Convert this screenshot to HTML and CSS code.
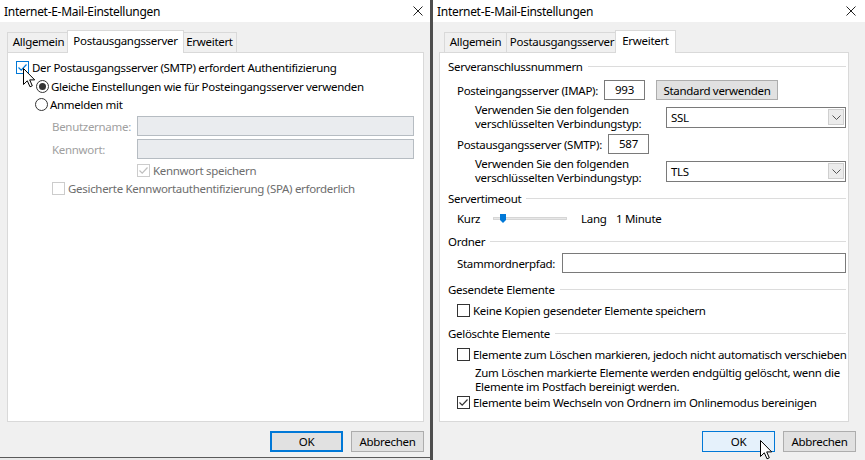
FILE: index.html
```html
<!DOCTYPE html>
<html lang="de">
<head>
  <meta charset="UTF-8">
  <title>Internet-E-Mail-Einstellungen</title>
  <link rel="stylesheet" href="styles.css">
</head>
<body>
  <div class="desktop">

    <!-- Dialog 1: Postausgangsserver -->
    <div class="dialog dialog-left">
      <div class="titlebar">
        <span class="title">Internet-E-Mail-Einstellungen</span>
        <svg class="close" width="10" height="10" viewBox="0 0 10 10"><path d="M0.5 0.5 L9.5 9.5 M9.5 0.5 L0.5 9.5" stroke="#222" stroke-width="1"/></svg>
      </div>
      <div class="tabs">
        <div class="tab tab-general">Allgemein</div>
        <div class="tab tab-smtp active">Postausgangsserver</div>
        <div class="tab tab-adv">Erweitert</div>
      </div>
      <div class="panel panel-smtp">
        <div class="row row-auth">
          <svg class="cb hover" width="13" height="13" viewBox="0 0 13 13"><rect x="0.5" y="0.5" width="12" height="12"/><path d="M2.5 6.5 L5.2 9.2 L10.5 3.5"/></svg>
          <span>Der Postausgangsserver (SMTP) erfordert Authentifizierung</span>
        </div>
        <div class="row row-same">
          <svg class="radio" width="13" height="13" viewBox="0 0 13 13"><circle cx="6.5" cy="6.5" r="6"/><circle class="dot" cx="6.5" cy="6.5" r="3.5"/></svg>
          <span>Gleiche Einstellungen wie für Posteingangsserver verwenden</span>
        </div>
        <div class="row row-login">
          <svg class="radio" width="13" height="13" viewBox="0 0 13 13"><circle cx="6.5" cy="6.5" r="6"/></svg>
          <span>Anmelden mit</span>
        </div>
        <div class="row row-field">
          <span class="field-label disabled">Benutzername:</span>
          <span class="textbox disabled"></span>
        </div>
        <div class="row row-field">
          <span class="field-label disabled">Kennwort:</span>
          <span class="textbox disabled"></span>
        </div>
        <div class="row row-save">
          <svg class="cb disabled" width="13" height="13" viewBox="0 0 13 13"><rect x="0.5" y="0.5" width="12" height="12"/><path d="M2.5 6.5 L5.2 9.2 L10.5 3.5"/></svg>
          <span class="muted">Kennwort speichern</span>
        </div>
        <div class="row row-spa">
          <svg class="cb disabled" width="13" height="13" viewBox="0 0 13 13"><rect x="0.5" y="0.5" width="12" height="12"/></svg>
          <span class="muted">Gesicherte Kennwortauthentifizierung (SPA) erforderlich</span>
        </div>
      </div>
      <div class="actions">
        <button class="btn default">OK</button>
        <button class="btn">Abbrechen</button>
      </div>
      <svg class="cursor cursor-left" width="13" height="20" viewBox="0 0 13 20"><path d="M0.5 0.5 L0.5 16.5 L4.3 12.8 L7 18.8 L9.3 17.8 L6.7 11.9 L11.7 11.9 Z"/></svg>
    </div>

    <div class="divider"></div>

    <!-- Dialog 2: Erweitert -->
    <div class="dialog dialog-right">
      <div class="titlebar">
        <span class="title">Internet-E-Mail-Einstellungen</span>
        <svg class="close" width="10" height="10" viewBox="0 0 10 10"><path d="M0.5 0.5 L9.5 9.5 M9.5 0.5 L0.5 9.5" stroke="#222" stroke-width="1"/></svg>
      </div>
      <div class="tabs">
        <div class="tab tab-general">Allgemein</div>
        <div class="tab tab-smtp">Postausgangsserver</div>
        <div class="tab tab-adv active">Erweitert</div>
      </div>
      <div class="panel panel-adv">
        <div class="group-title g-ports">Serveranschlussnummern</div>

        <div class="row row-imap">
          <span class="lbl-imap">Posteingangsserver (IMAP):</span>
          <span class="textbox port">993</span>
          <button class="btn btn-std">Standard verwenden</button>
        </div>
        <div class="row row-crypt">
          <span class="crypt-text">Verwenden Sie den folgenden<br>verschlüsselten Verbindungstyp:</span>
          <div class="select">
            <span>SSL</span>
            <span class="select-arrow"><svg width="9" height="5" viewBox="0 0 9 5"><path d="M0.5 0.5 L4.5 4.5 L8.5 0.5" fill="none" stroke="#555"/></svg></span>
          </div>
        </div>
        <div class="row row-smtp">
          <span class="lbl-smtp">Postausgangsserver (SMTP):</span>
          <span class="textbox port">587</span>
        </div>
        <div class="row row-crypt">
          <span class="crypt-text">Verwenden Sie den folgenden<br>verschlüsselten Verbindungstyp:</span>
          <div class="select">
            <span>TLS</span>
            <span class="select-arrow"><svg width="9" height="5" viewBox="0 0 9 5"><path d="M0.5 0.5 L4.5 4.5 L8.5 0.5" fill="none" stroke="#555"/></svg></span>
          </div>
        </div>

        <div class="group-title g-timeout">Servertimeout</div>
        <div class="row row-timeout">
          <span class="lbl-short">Kurz</span>
          <span class="slider">
            <span class="track"></span>
            <svg class="thumb" width="6" height="9" viewBox="0 0 6 9"><path d="M0 0 H6 V6 L3 9 L0 6 Z" fill="#0078d7"/></svg>
          </span>
          <span class="lbl-long">Lang</span>
          <span>1 Minute</span>
        </div>

        <div class="group-title g-folder">Ordner</div>
        <div class="row row-root">
          <span class="lbl-root">Stammordnerpfad:</span>
          <span class="textbox root"></span>
        </div>

        <div class="group-title g-sent">Gesendete Elemente</div>
        <div class="row row-check r-nocopy">
          <svg class="cb" width="13" height="13" viewBox="0 0 13 13"><rect x="0.5" y="0.5" width="12" height="12"/></svg>
          <span>Keine Kopien gesendeter Elemente speichern</span>
        </div>

        <div class="group-title g-deleted">Gelöschte Elemente</div>
        <div class="row row-check r-mark">
          <svg class="cb" width="13" height="13" viewBox="0 0 13 13"><rect x="0.5" y="0.5" width="12" height="12"/></svg>
          <span>Elemente zum Löschen markieren, jedoch nicht automatisch verschieben</span>
        </div>
        <p class="note">Zum Löschen markierte Elemente werden endgültig gelöscht, wenn die<br>Elemente im Postfach bereinigt werden.</p>
        <div class="row row-check r-purge">
          <svg class="cb" width="13" height="13" viewBox="0 0 13 13"><rect x="0.5" y="0.5" width="12" height="12"/><path d="M2.5 6.5 L5.2 9.2 L10.5 3.5"/></svg>
          <span>Elemente beim Wechseln von Ordnern im Onlinemodus bereinigen</span>
        </div>
      </div>
      <div class="actions">
        <button class="btn hover">OK</button>
        <button class="btn">Abbrechen</button>
      </div>
      <svg class="cursor cursor-right" width="13" height="20" viewBox="0 0 13 20"><path d="M0.5 0.5 L0.5 16.5 L4.3 12.8 L7 18.8 L9.3 17.8 L6.7 11.9 L11.7 11.9 Z"/></svg>
    </div>

  </div>
</body>
</html>
```

FILE: styles.css
```css
* {
  box-sizing: border-box;
  margin: 0;
  padding: 0;
}

body {
  width: 865px;
  height: 460px;
  overflow: hidden;
  font-family: "Noto Sans", "Open Sans", sans-serif;
  font-size: 11.5px;
  letter-spacing: -0.3px;
  white-space: nowrap;
  color: #000;
  background-color: #e9e9e9;
}

.desktop {
  display: flex;
  height: 460px;
}

.dialog {
  position: relative;
  display: flex;
  flex-direction: column;
  background-color: #f0f0f0;
}

.dialog-left {
  width: 430px;
  height: 458px;
  border-bottom: 1px solid #5a5a5a;
}

.dialog-right {
  width: 432px;
  height: 460px;
}

.divider {
  width: 3px;
  background-color: #4e4e4e;
}

/* title bar */

.titlebar {
  height: 22px;
  display: flex;
  align-items: center;
  justify-content: space-between;
  padding: 0 7px 0 4px;
  background-color: #fff;
  font-size: 12px;
}

.dialog-right .titlebar {
  padding-right: 9px;
}

/* tabs */

.tabs {
  display: flex;
  align-items: flex-end;
  height: 22px;
  margin-top: 8px;
  padding-left: 7px;
}

.dialog-right .tabs {
  padding-left: 11px;
}

.tab {
  height: 20px;
  line-height: 18px;
  text-align: center;
  border: 1px solid #d9d9d9;
  border-bottom: none;
  background-color: #f0f0f0;
  margin-right: -1px;
}

.tab-general {
  width: 63px;
}

.tab-smtp {
  width: 112px;
}

.tab-adv {
  width: 55px;
}

.tab.active {
  position: relative;
  z-index: 1;
  height: 23px;
  margin: 0 -2px -1px;
  line-height: 20px;
  background-color: #fff;
}

.tab-smtp.active {
  width: 117px;
}

.tab-adv.active {
  width: 61px;
}

/* panel */

.panel {
  height: 370px;
  background-color: #fff;
  border: 1px solid #d9d9d9;
}

.panel-smtp {
  width: 417px;
  margin-left: 7px;
  padding: 5px 0 0 8px;
}

.panel-adv {
  width: 410px;
  margin-left: 6px;
  padding: 5px 2px 0 8px;
}

.row {
  display: flex;
  align-items: center;
}

.row > span {
  flex: none;
}

/* checkbox / radio */

.cb {
  flex: none;
  margin-right: 3px;
}

.cb rect {
  fill: #fff;
  stroke: #333;
}

.cb path {
  fill: none;
  stroke: #333;
  stroke-width: 1.2;
}

.cb.hover rect {
  fill: #fff;
  stroke: #0078d7;
}

.cb.hover path {
  stroke: #0078d7;
}

.cb.disabled rect {
  stroke: #cccccc;
}

.cb.disabled path {
  stroke: #bfbfbf;
}

.radio {
  flex: none;
  margin-right: 2px;
}

.radio circle {
  fill: #fff;
  stroke: #333;
}

.radio .dot {
  fill: #333;
  stroke: none;
}

/* left dialog rows */

.row-auth {
  height: 19px;
}

.row-same {
  height: 18px;
  margin-left: 20px;
}

.row-login {
  height: 18px;
  margin-left: 19px;
}

.row-field {
  height: 20px;
  margin-top: 3px;
  margin-left: 36px;
}

.field-label {
  width: 85px;
}

.disabled {
  color: #a0a0a0;
}

.muted {
  color: #6d6d6d;
}

.textbox {
  display: inline-block;
  height: 20px;
  border: 1px solid #7a7a7a;
  background-color: #fff;
}

.textbox.disabled {
  width: 277px;
  border-color: #b6bcc2;
  background-color: #eaecef;
}

.row-save {
  height: 18px;
  margin-top: 2px;
  margin-left: 121px;
}

.row-spa {
  height: 18px;
  margin-left: 36px;
}

/* right dialog */

.group-title {
  display: flex;
  align-items: center;
  height: 16px;
}

.group-title::after {
  content: "";
  flex: 1;
  height: 1px;
  margin-left: 5px;
  background-color: #dcdcdc;
}

.g-timeout {
  margin-top: 5px;
}

.g-folder {
  margin-top: 7px;
}

.g-sent {
  margin-top: 8px;
}

.g-deleted {
  margin-top: 7px;
}

.row-imap,
.row-smtp {
  height: 20px;
  margin-top: 6px;
  margin-left: 9px;
}

.row-smtp {
  margin-top: 3px;
}

.lbl-imap {
  width: 147px;
}

.lbl-smtp {
  width: 151px;
}

.textbox.port {
  width: 41px;
  line-height: 18px;
  text-align: center;
}

.btn {
  height: 21px;
  font-family: inherit;
  font-size: 11.5px;
  letter-spacing: -0.3px;
  color: #000;
  background-color: #e1e1e1;
  border: 1px solid #adadad;
}

.btn-std {
  width: 122px;
  height: 20px;
  margin-left: 11px;
}

.row-crypt {
  height: 28px;
  margin-top: 3px;
  margin-left: 27px;
}

.crypt-text {
  width: 191px;
  line-height: 14px;
}

.select {
  display: flex;
  align-items: center;
  justify-content: space-between;
  width: 180px;
  height: 21px;
  padding: 0 1px 0 4px;
  border: 1px solid #7a7a7a;
  background-color: #fff;
}

.select-arrow {
  display: flex;
  align-items: center;
  justify-content: center;
  width: 16px;
  height: 16px;
  border: 1px solid #cfcfcf;
  background-color: #ececec;
}

.row-timeout {
  height: 16px;
  margin-top: 4px;
  margin-left: 9px;
}

.lbl-short {
  width: 36px;
}

.slider {
  position: relative;
  width: 74px;
  height: 16px;
  display: flex;
  align-items: center;
}

.track {
  width: 74px;
  height: 3px;
  background-color: #e7e7e7;
  border: 1px solid #d6d6d6;
}

.thumb {
  position: absolute;
  left: 7px;
  top: 4px;
}

.lbl-long {
  margin-left: 14px;
  width: 35px;
}

.row-root {
  height: 20px;
  margin-top: 4px;
  margin-left: 9px;
}

.lbl-root {
  width: 105px;
}

.textbox.root {
  width: 284px;
}

.row-check {
  height: 16px;
  margin-top: 5px;
  margin-left: 9px;
}

.note {
  margin-top: 4px;
  margin-left: 27px;
  line-height: 13.5px;
}

.r-purge {
  margin-top: 1px;
}

/* bottom buttons */

.actions {
  display: flex;
  justify-content: flex-end;
  gap: 8px;
  margin-top: 9px;
  padding-right: 6px;
}

.dialog-right .actions {
  padding-right: 9px;
}

.actions .btn {
  width: 73px;
}

.btn.default {
  border-color: #0078d7;
  box-shadow: inset 0 0 0 1px #0078d7;
}

.btn.hover {
  background-color: #e5f1fb;
  border-color: #0078d7;
}

/* mouse pointers */

.cursor {
  position: absolute;
  z-index: 5;
}

.cursor path {
  fill: #fff;
  stroke: #000;
  stroke-width: 1;
}

.cursor-left {
  left: 23px;
  top: 68px;
}

.cursor-right {
  left: 327px;
  top: 440px;
}
```
